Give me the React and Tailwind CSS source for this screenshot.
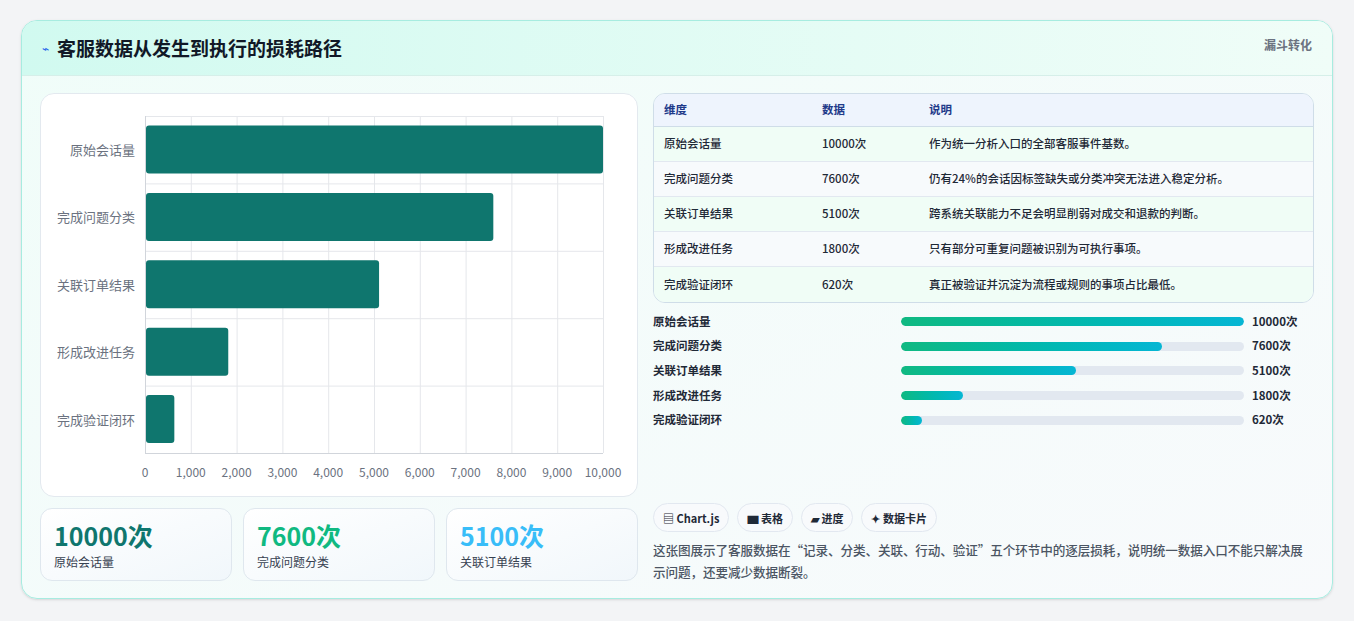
import React from "react";

const rows = [
  ["原始会话量", 10000, "作为统一分析入口的全部客服事件基数。"],
  ["完成问题分类", 7600, "仍有24%的会话因标签缺失或分类冲突无法进入稳定分析。"],
  ["关联订单结果", 5100, "跨系统关联能力不足会明显削弱对成交和退款的判断。"],
  ["形成改进任务", 1800, "只有部分可重复问题被识别为可执行事项。"],
  ["完成验证闭环", 620, "真正被验证并沉淀为流程或规则的事项占比最低。"],
];
const ticks = ["0","1,000","2,000","3,000","4,000","5,000","6,000","7,000","8,000","9,000","10,000"];

function Chart() {
  const W = 458, H = 337;
  return (
    <div className="flex pt-[22px]">
      <div className="w-[104px] flex flex-col">
        {rows.map((r) => (
          <div key={r[0]} className="h-[67.4px] flex items-center justify-end pr-[10px] text-[13px] text-[#6b7280]">{r[0]}</div>
        ))}
      </div>
      <div className="flex flex-col">
        <svg width={W + 2} height={H + 1} className="block">
          {ticks.map((t, i) => (
            <line key={i} x1={i * W / 10 + 0.5} x2={i * W / 10 + 0.5} y1={0} y2={H} stroke="#e5e7eb" />
          ))}
          {[0,1,2,3,4,5].map(i => (
            <line key={i} x1={0} x2={W} y1={i * H / 5 + 0.5} y2={i * H / 5 + 0.5} stroke="#e5e7eb" />
          ))}
          <line x1={0.5} x2={0.5} y1={0} y2={H} stroke="#d1d5db" />
          <line x1={0} x2={W} y1={H + 0.5} y2={H + 0.5} stroke="#d1d5db" />
          {rows.map((r, i) => (
            <rect key={i} x={1} y={i * H / 5 + 9.5} width={(r[1] / 10000) * (W - 1)} height={48} rx={3} fill="#0f766e" />
          ))}
        </svg>
        <div className="relative h-[20px] mt-[9px] text-[12px] text-[#6b7280] w-[460px]">
          {ticks.map((t, i) => (
            <span key={i} className="absolute -translate-x-1/2" style={{ left: i * W / 10 }}>{t}</span>
          ))}
        </div>
      </div>
    </div>
  );
}

export default function App() {
  return (
    <div className="w-[1354px] h-[621px] bg-[#f3f4f6] pt-[20px] pl-[21px]" style={{ fontFamily: '"Noto Sans CJK SC", "Noto Sans", sans-serif' }}>
      <div className="w-[1312px] h-[579px] rounded-[16px] border border-[#a7ece0] bg-gradient-to-br from-[#f0fdf9] to-[#f8fafc] overflow-hidden shadow-sm">
        <div className="h-[55px] bg-gradient-to-r from-[#d1faf0] to-[#f0fdf8] border-b border-[#d6efe9] flex items-start justify-between px-[20px]">
          <div className="flex items-center gap-[8px] mt-[13px]">
            <span className="text-[#2563eb] text-[12px]">⌁</span>
            <span className="text-[19px] font-bold text-[#111827]">客服数据从发生到执行的损耗路径</span>
          </div>
          <span className="mt-[15px] text-[12px] font-bold text-[#6b7280]">漏斗转化</span>
        </div>
        <div className="flex gap-[15px] px-[18px] pt-[17px]">
          <div className="w-[598px] flex flex-col gap-[11px]">
            <div className="h-[404px] bg-white rounded-[14px] border border-[#e3e9ef]">
              <Chart />
            </div>
            <div className="flex gap-[11px]">
              {[["10000次","原始会话量","text-[#0f766e]"],["7600次","完成问题分类","text-[#10b981]"],["5100次","关联订单结果","text-[#38bdf8]"]].map(s => (
                <div key={s[1]} className="w-[192px] h-[73px] bg-gradient-to-br from-white to-[#f1f7fb] rounded-[12px] border border-[#dfe7ee] px-[13px] pt-[8px]">
                  <div className={`text-[25px] font-bold leading-[36px] ${s[2]}`}>{s[0]}</div>
                  <div className="text-[12px] text-[#374151]">{s[1]}</div>
                </div>
              ))}
            </div>
          </div>
          <div className="w-[663px] flex flex-col">
            <div className="rounded-[12px] border border-[#cfdde8] overflow-hidden text-[11.5px] text-[#1f2937] font-medium">
              <div className="h-[33px] bg-[#eef4fd] flex items-center text-[#1e3a8a] font-bold border-b border-[#cfdde8]">
                <span className="w-[168px] pl-[10px]">维度</span><span className="w-[107px]">数据</span><span>说明</span>
              </div>
              {rows.map((r, i) => (
                <div key={i} className={`h-[35px] flex items-center ${i % 2 ? "bg-[#f7fafc]" : "bg-[#f0fdf6]"} ${i < 4 ? "border-b border-[#e2e8f0]" : ""}`}>
                  <span className="w-[168px] pl-[10px]">{r[0]}</span><span className="w-[107px]">{r[1]}次</span><span>{r[2]}</span>
                </div>
              ))}
            </div>
            <div className="flex flex-col mt-[6px] text-[11.5px] font-bold text-[#1f2937]">
              {rows.map((r, i) => (
                <div key={i} className="h-[24.7px] flex items-center">
                  <span className="w-[248px]">{r[0]}</span>
                  <div className="w-[343px] h-[9px] rounded-full bg-[#e2e8f0] overflow-hidden">
                    <div className="h-full rounded-full bg-gradient-to-r from-[#10b981] to-[#06b6d4]" style={{ width: `${r[1] / 100}%` }} />
                  </div>
                  <span className="ml-[8px]">{r[1]}次</span>
                </div>
              ))}
            </div>
            <div className="flex gap-[8px] mt-[71px] text-[11px] font-bold text-[#1f2937]">
              {["▤ Chart.js","▆ 表格","▰ 进度","✦ 数据卡片"].map(c => (
                <span key={c} className="h-[29px] px-[9px] flex items-center rounded-full border border-[#e2e8f0] bg-[#f8fafc]">{c}</span>
              ))}
            </div>
            <p className="mt-[7px] text-[12.6px] leading-[22px] text-[#4b5563] font-medium tracking-[-0.1px]">这张图展示了客服数据在“记录、分类、关联、行动、验证”五个环节中的逐层损耗，说明统一数据入口不能只解决展示问题，还要减少数据断裂。</p>
          </div>
        </div>
      </div>
    </div>
  );
}
